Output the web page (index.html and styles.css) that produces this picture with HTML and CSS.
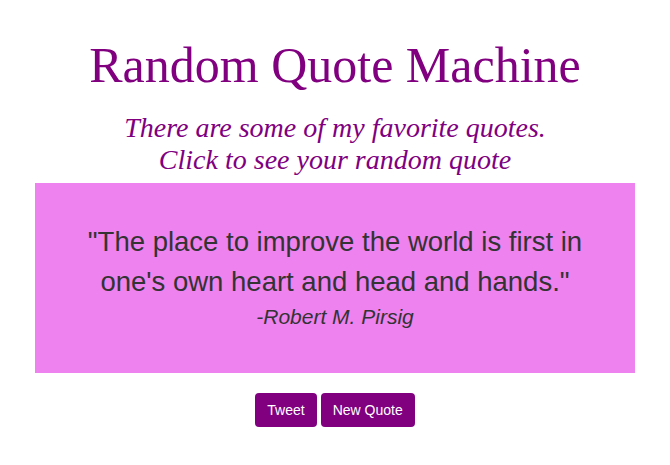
FILE: index.html
```html
<!DOCTYPE html>
<html>
<head>
<meta charset="utf-8">
<link rel="stylesheet" href="styles.css">
</head>
<body>
<div class="page">
  <h1 class="title">Random Quote Machine</h1>
  <p class="subtitle">There are some of my favorite quotes.<br>Click to see your random quote</p>
  <div class="quote-box">
    <p class="quote-text">"The place to improve the world is first in one's own heart and head and hands."</p>
    <p class="quote-author">-Robert M. Pirsig</p>
  </div>
  <div class="actions">
    <button class="btn">Tweet</button>
    <button class="btn">New Quote</button>
  </div>
</div>
</body>
</html>
```
FILE: styles.css
```css
html, body {
  margin: 0;
  padding: 0;
  background: #fff;
}
.page {
  display: flex;
  flex-direction: column;
  align-items: center;
  padding-top: 36px;
}
.title {
  margin: 0;
  font-family: "Liberation Serif", serif;
  font-weight: normal;
  font-size: 50px;
  line-height: 58px;
  color: #800080;
}
.subtitle {
  margin: 18px 0 0;
  font-family: "Liberation Serif", serif;
  font-style: italic;
  font-size: 28px;
  line-height: 32px;
  color: #800080;
  text-align: center;
}
.quote-box {
  box-sizing: border-box;
  margin-top: 7px;
  width: 600px;
  height: 190px;
  background: #ee82ee;
  padding: 39px 40px 0;
  text-align: center;
  font-family: "Liberation Sans", Arial, sans-serif;
  color: #333;
}
.quote-text {
  margin: 0;
  font-size: 27.5px;
  line-height: 40px;
}
.quote-author {
  margin: 0;
  font-style: italic;
  font-size: 21px;
  line-height: 29px;
}
.actions {
  margin-top: 20px;
  display: flex;
  gap: 4px;
}
.btn {
  font-family: "Liberation Sans", Arial, sans-serif;
  font-size: 14px;
  line-height: 20px;
  padding: 7px 12px;
  border: 0;
  border-radius: 4px;
  background: #800080;
  color: #fff;
}
```
